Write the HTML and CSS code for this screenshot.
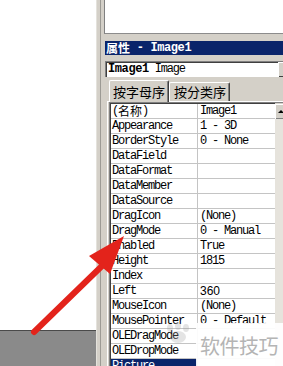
FILE: index.html
```html
<!DOCTYPE html>
<html>
<head>
<meta charset="utf-8">
<link rel="stylesheet" href="styles.css">
</head>
<body>
<div class="left">
  <div class="blank"></div>
  <div class="tray"></div>
</div>
<div class="panel">
  <div class="splitter"></div>
  <div class="main">
    <div class="topwin"></div>
    <div class="titlebar"><span class="cjk">属性</span><span class="mono"> - Image1</span></div>
    <div class="combo">
      <div class="combo-text"><b>Image1</b> Image</div>
      <div class="combo-btn"></div>
    </div>
    <div class="tabs">
      <div class="tab active">按字母序</div>
      <div class="tab">按分类序</div>
    </div>
    <div class="page">
      <div class="gridbox">
        <div class="props">
          <div class="k name">(<span class="cjk">名称</span>)</div><div class="v">Image1</div>
          <div class="k">Appearance</div><div class="v">1 - 3D</div>
          <div class="k">BorderStyle</div><div class="v">0 - None</div>
          <div class="k">DataField</div><div class="v"></div>
          <div class="k">DataFormat</div><div class="v"></div>
          <div class="k">DataMember</div><div class="v"></div>
          <div class="k">DataSource</div><div class="v"></div>
          <div class="k">DragIcon</div><div class="v">(None)</div>
          <div class="k">DragMode</div><div class="v">0 - Manual</div>
          <div class="k">Enabled</div><div class="v">True</div>
          <div class="k">Height</div><div class="v">1815</div>
          <div class="k">Index</div><div class="v"></div>
          <div class="k">Left</div><div class="v sans">360</div>
          <div class="k">MouseIcon</div><div class="v">(None)</div>
          <div class="k">MousePointer</div><div class="v">0 - Default</div>
          <div class="k">OLEDragMode</div><div class="v"></div>
          <div class="k">OLEDropMode</div><div class="v"></div>
          <div class="k sel">Picture</div><div class="v"></div>
        </div>
        <div class="vscroll">
          <div class="sbtn"><span class="uparrow"></span></div>
          <div class="track"></div>
        </div>
      </div>
    </div>
  </div>
</div>
<div class="watermark">
  <svg class="wm-logo" width="34" height="22" viewBox="0 0 34 22">
    <ellipse cx="8" cy="6" rx="3" ry="4" fill="#a0a0a0"/>
    <ellipse cx="16" cy="4" rx="3" ry="4" fill="#a0a0a0"/>
    <ellipse cx="24" cy="6" rx="3" ry="4" fill="#a0a0a0"/>
    <ellipse cx="16" cy="15" rx="8" ry="6" fill="#a0a0a0"/>
  </svg>
  <div class="wm-box">软件技巧</div>
</div>
<svg class="arrow" width="283" height="366" viewBox="0 0 283 366">
  <line x1="34" y1="332" x2="104" y2="264" stroke="#e3231b" stroke-width="6" stroke-linecap="round"/>
  <polygon points="124,236 89,256 110,274" fill="#e3231b"/>
</svg>
</body>
</html>
```
FILE: styles.css
```css
html, body {
  margin: 0;
  padding: 0;
}
body {
  width: 283px;
  height: 366px;
  overflow: hidden;
  background: #ffffff;
  display: flex;
  position: relative;
  font-family: "Liberation Mono", "Noto Sans CJK SC", monospace;
  font-size: 12px;
  letter-spacing: -1.2px;
  color: #000;
}
.cjk {
  font-family: "Noto Sans CJK SC", sans-serif;
  letter-spacing: 0;
}
.left {
  width: 96px;
  flex: none;
  display: flex;
  flex-direction: column;
}
.blank {
  flex: 1;
  background: #ffffff;
}
.tray {
  height: 35px;
  flex: none;
  background: #8a8a8a;
  border-top: 1px solid #4a4a4a;
}
.panel {
  flex: 1;
  display: flex;
  background: #d4d0c8;
}
.splitter {
  width: 8px;
  flex: none;
  background: linear-gradient(to right, #e4e2dc 0, #e4e2dc 1px, #d4d0c8 1px, #d4d0c8 4px, #9c9a94 4px, #9c9a94 5px, #d4d0c8 5px);
}
.main {
  width: 179px;
  flex: none;
  display: flex;
  flex-direction: column;
}
.main > * {
  flex: none;
}
.topwin {
  height: 33px;
  background: #ffffff;
  border-left: 1px solid #808080;
  border-bottom: 1px solid #8c8c8c;
}
.titlebar {
  margin-top: 7px;
  margin-left: 1px;
  width: 190px;
  height: 14px;
  background: #0a246a;
  color: #fff;
  font-weight: bold;
  display: flex;
  align-items: center;
  line-height: 14px;
  padding-left: 1px;
}
.titlebar .cjk {
  font-size: 12px;
}
.titlebar .mono {
  letter-spacing: -0.4px;
  white-space: pre;
}
.combo {
  margin-top: 6px;
  margin-left: 1px;
  width: 189px;
  height: 16px;
  box-sizing: border-box;
  border-top: 1px solid #808080;
  border-left: 1px solid #808080;
  background: #fff;
  display: flex;
  box-shadow: inset 1px 1px 0 #404040;
}
.combo-text {
  flex: 1;
  padding-left: 2px;
  line-height: 15px;
  white-space: pre;
}
.combo-text b {
  letter-spacing: -0.4px;
}
.combo-btn {
  width: 16px;
  background: #d4d0c8;
  box-shadow: inset 1px 1px 0 #fff, inset -1px -1px 0 #404040;
}
.tabs {
  margin-top: 3px;
  padding-left: 5px;
  display: flex;
  align-items: flex-end;
  height: 21px;
  position: relative;
  z-index: 1;
}
.tab {
  font-family: "Noto Sans CJK SC", sans-serif;
  font-size: 13px;
  letter-spacing: 0;
  height: 18px;
  line-height: 18px;
  padding: 0 3px 0 4px;
  border-top: 1px solid #fff;
  border-left: 1px solid #fff;
  border-right: 1px solid #404040;
  box-shadow: inset -1px 0 0 #808080;
  border-radius: 2px 2px 0 0;
  background: #d4d0c8;
}
.tab.active {
  height: 21px;
  line-height: 21px;
  padding: 0 3px 0 3px;
  margin-bottom: -1px;
}
.page {
  margin-left: 3px;
  border-top: 1px solid #fff;
  border-left: 1px solid #fff;
  padding-left: 1px;
  flex: 1 1 auto;
  min-height: 0;
}
.gridbox {
  border-top: 1px solid #808080;
  border-left: 1px solid #808080;
  display: flex;
  width: 200px;
  height: 270px;
}
.props {
  width: 164px;
  flex: none;
  background: #fff;
  border-top: 1px solid #404040;
  border-left: 1px solid #404040;
  display: grid;
  grid-template-columns: 87px 1fr;
  grid-auto-rows: 15px;
  align-content: start;
}
.k, .v {
  box-sizing: border-box;
  height: 15px;
  border-bottom: 1px solid #c4c4c4;
  line-height: 15px;
  white-space: pre;
  overflow: hidden;
}
.k {
  border-right: 1px solid #c4c4c4;
  padding-left: 1px;
}
.v {
  padding-left: 2px;
}
.k.name {
  display: flex;
  align-items: center;
  line-height: 12px;
  overflow: visible;
}
.k.name .cjk {
  font-size: 12px;
  line-height: 12px;
}
.sans {
  font-family: "Liberation Sans", sans-serif;
  letter-spacing: 0;
}
.k.sel {
  background: #0a246a;
  color: #fff;
}
.vscroll {
  width: 16px;
  flex: none;
  display: flex;
  flex-direction: column;
  padding-top: 1px;
}
.sbtn {
  height: 15px;
  flex: none;
  background: #d4d0c8;
  box-shadow: inset 1px 1px 0 #fff, inset -1px -1px 0 #808080;
  display: flex;
  align-items: center;
  padding-left: 3px;
}
.uparrow {
  width: 0;
  height: 0;
  border-left: 3px solid transparent;
  border-right: 3px solid transparent;
  border-bottom: 3px solid #000;
}
.track {
  flex: 1;
  background: #e6e3dc;
}
.watermark {
  position: absolute;
  left: 150px;
  top: 318px;
  width: 133px;
  height: 48px;
}
.wm-logo {
  position: absolute;
  left: 12px;
  top: 4px;
  opacity: 0.28;
}
.wm-box {
  position: absolute;
  left: 46px;
  top: 5px;
  width: 87px;
  height: 43px;
  background: rgba(255, 255, 255, 0.93);
  font-family: "Noto Sans CJK SC", sans-serif;
  font-size: 20px;
  letter-spacing: -0.5px;
  color: #b4b4b4;
  line-height: 20px;
  box-sizing: border-box;
  padding: 13px 0 0 4px;
  white-space: nowrap;
}
.arrow {
  position: absolute;
  left: 0;
  top: 0;
  pointer-events: none;
}
```
